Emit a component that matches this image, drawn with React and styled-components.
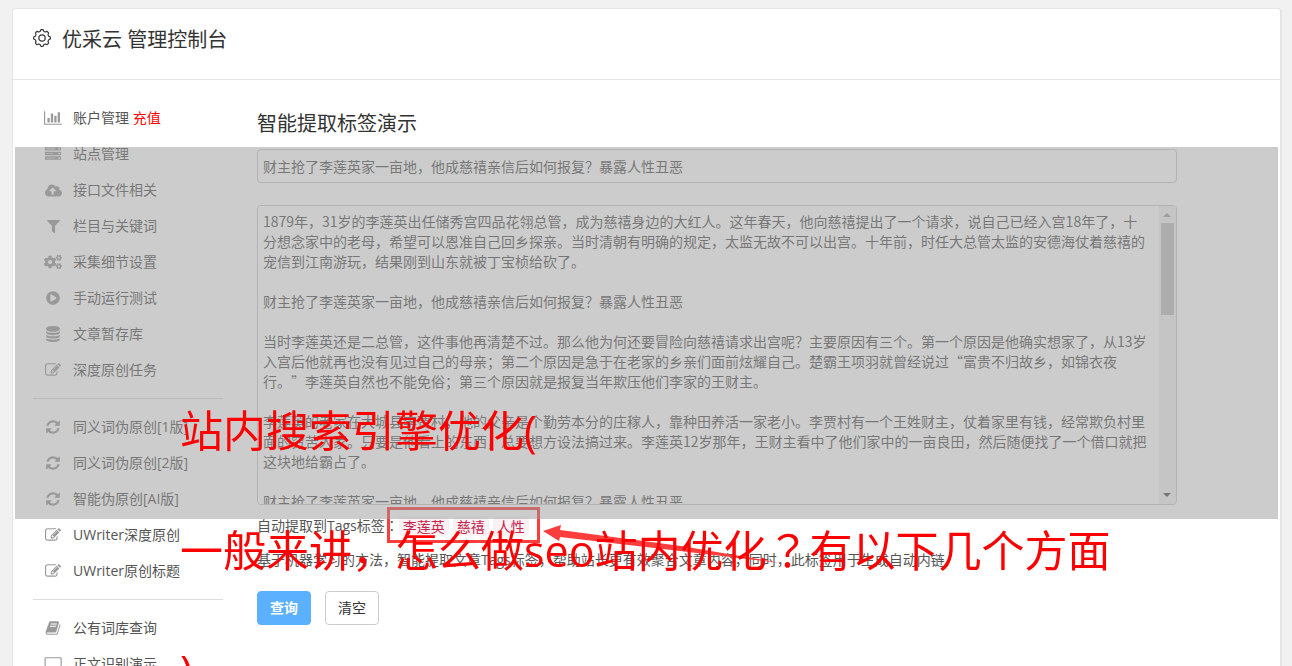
import React from 'react';
import styled, { createGlobalStyle } from 'styled-components';
import { FaCloudUploadAlt, FaCogs, FaFilter, FaPlayCircle } from 'react-icons/fa';

const latinFirst = '"Open Sans", "Noto Sans CJK SC", sans-serif';
const hanFirst = '"Noto Sans CJK SC", sans-serif';

const GlobalStyle = createGlobalStyle`
  *, *::before, *::after { box-sizing: border-box; }
  body {
    margin: 0;
    background: #f1f1f1;
    color: #555;
    font: 14px/20px ${latinFirst};
    text-spacing-trim: space-all;
  }
`;

const Page = styled.div`
  position: relative;
  height: 100vh;
  overflow: hidden;
  padding: 8px 10px 0 12px;
`;

const Card = styled.div`
  min-height: 100%;
  background: #fff;
  border: 1px solid #e5e5e5;
  border-right-width: 2px;
  border-radius: 4px;
`;

const Header = styled.header`
  display: flex;
  align-items: center;
  gap: 11px;
  height: 71px;
  padding: 0 20px 12px;
  border-bottom: 1px solid #e5e5e5;
`;

const Title = styled.h1`
  margin: 0;
  padding-top: 4px;
  color: #333;
  font-size: 20px;
  line-height: 28px;
  font-weight: 400;
`;

const Body = styled.div`
  display: flex;
  align-items: flex-start;
  gap: 34px;
  padding: 20px;
`;

const Sidebar = styled.nav`
  flex: 0 0 190px;
`;

const Menu = styled.ul`
  list-style: none;
  margin: 0;
  padding: 0;

  & + & {
    margin-top: 10px;
    padding-top: 10px;
    border-top: 1px solid #ddd;
  }
`;

const MenuLink = styled.a`
  display: flex;
  align-items: center;
  gap: 10px;
  height: 36px;
  padding-left: 10px;
  color: #555;
  text-decoration: none;
  white-space: nowrap;
`;

const IconSlot = styled.span`
  display: flex;
  justify-content: center;
  flex: 0 0 20px;
  color: #999;
`;

const Recharge = styled.span`
  color: #f00;
`;

const Main = styled.main`
  position: relative;
  flex: 1;
  max-width: 920px;
`;

const Heading = styled.h2`
  margin: 10px 0 11px;
  color: #333;
  font-size: 20px;
  line-height: 28px;
  font-weight: 400;
`;

const TitleInput = styled.input`
  display: block;
  width: 100%;
  height: 34px;
  padding: 0 5px;
  border: 1px solid #ccc;
  border-radius: 4px;
  background: #fff;
  color: #555;
  font: 14px/20px ${hanFirst};
`;

const ArticleFrame = styled.div`
  display: flex;
  height: 300px;
  margin-top: 22px;
  border: 1px solid #ccc;
  border-radius: 4px;
  overflow: hidden;
`;

const ArticleBox = styled.textarea`
  flex: 1;
  min-width: 0;
  padding: 5px 10px 5px 5px;
  border: 0;
  outline: 0;
  background: #fff;
  color: #555;
  font: 14px/20px ${hanFirst};
  text-spacing-trim: space-all;
  resize: none;
`;

const ScrollRail = styled.div`
  display: flex;
  flex-direction: column;
  align-items: center;
  width: 17px;
  background: #f1f1f1;
`;

const ScrollArrow = styled.svg`
  flex: 0 0 17px;
  width: 17px;
  fill: ${(p) => (p.$active ? '#505050' : '#a3a3a3')};
`;

const ScrollTrack = styled.div`
  flex: 1;
  width: 13px;
`;

const ScrollThumb = styled.div`
  height: 35%;
  background: #c1c1c1;
`;

const TagRow = styled.div`
  display: flex;
  align-items: center;
  height: 20px;
  margin-top: 11px;
`;

const Tags = styled.div`
  display: flex;
  gap: 4px;
`;

const Tag = styled.code`
  padding: 0 4px;
  border-radius: 4px;
  background: #f9f2f4;
  color: #c7254e;
  font: 14px/19px ${hanFirst};
`;

/* Full-width punctuation centred in its cell; adds nothing to the line's height */
const CentredMark = styled.span`
  font-family: "Noto Sans CJK TC", sans-serif;
  line-height: 0;
`;

const Hint = styled.p`
  margin: 14px 0 21px;
`;

const Buttons = styled.div`
  display: flex;
  gap: 14px;
`;

const Button = styled.button`
  width: 54px;
  height: 34px;
  padding: 0;
  border: 1px solid ${(p) => (p.$primary ? '#5bb0ff' : '#ccc')};
  border-radius: 4px;
  background: ${(p) => (p.$primary ? '#5bb0ff' : '#fff')};
  color: ${(p) => (p.$primary ? '#fff' : '#333')};
  font: ${(p) => (p.$primary ? 700 : 400)} 14px/20px ${latinFirst};
`;

const TagFrame = styled.div`
  position: absolute;
  left: 130px;
  top: 407px;
  width: 153px;
  height: 36px;
  border: 3px solid #fb3d3d;
`;

const Arrow = styled.svg`
  position: absolute;
  left: 286px;
  top: 420px;
`;

const Banner = styled.div`
  position: absolute;
  top: 147px;
  left: 15px;
  right: 14px;
  height: 372px;
  padding: 254px 0 0 165px;
  background: rgba(153, 153, 153, 0.5);
  pointer-events: none;
`;

const BannerLine = styled.p`
  margin: 0 0 60px;
  color: #f00;
  font-size: 43px;
  line-height: 60px;
  white-space: nowrap;
`;

const glyphs = {
  chart: [2048, 'M640 896v512h-256v-512h256zm384-512v1024h-256v-1024h256zm1024 1152v128h-2048v-1536h128v1408h1920zm-640-896v768h-256v-768h256zm384-384v1152h-256v-1152h256z'],
  server: [1792, 'M0 128h1792v384h-1792zM128 288v64h1024v-64zm1376-48v160h160v-160zM0 640h1792v384h-1792zM128 800v64h768v-64zm1376-48v160h160v-160zM0 1152h1792v384h-1792zM128 1312v64h1024v-64zm1376-48v160h160v-160z'],
  database: [1792, 'M896 768q237 0 443-43t325-127v170q0 69-103 128t-280 93.5-385 34.5-385-34.5-280-93.5-103-128v-170q119 84 325 127t443 43zm0 768q237 0 443-43t325-127v170q0 69-103 128t-280 93.5-385 34.5-385-34.5-280-93.5-103-128v-170q119 84 325 127t443 43zm0-384q237 0 443-43t325-127v170q0 69-103 128t-280 93.5-385 34.5-385-34.5-280-93.5-103-128v-170q119 84 325 127t443 43zm0-1152q208 0 385 34.5t280 93.5 103 128v128q0 69-103 128t-280 93.5-385 34.5-385-34.5-280-93.5-103-128v-128q0-69 103-128t280-93.5 385-34.5z'],
  edit: [1792, 'M888 1184l116-116-152-152-116 116v56h96v96h56zm440-720q-16-16-33 1l-350 350q-17 17-1 33t33-1l350-350q17-17 1-33zm80 594v190q0 119-84.5 203.5t-203.5 84.5h-832q-119 0-203.5-84.5t-84.5-203.5v-832q0-119 84.5-203.5t203.5-84.5h832q63 0 117 25 15 7 18 23 3 17-9 29l-49 49q-14 14-32 8-23-6-45-6h-832q-66 0-113 47t-47 113v832q0 66 47 113t113 47h832q66 0 113-47t47-113v-126q0-13 9-22l64-64q15-15 35-7t20 29zm-96-738l288 288-672 672h-288v-288zm444 132l-92 92-288-288 92-92q28-28 68-28t68 28l152 152q28 28 28 68t-28 68z'],
  refresh: [1792, 'M1639 1056q0 5-1 7-64 268-268 434.5t-478 166.5q-146 0-282.5-55t-243.5-157l-129 129q-19 19-45 19t-45-19-19-45v-448q0-26 19-45t45-19h448q26 0 45 19t19 45-19 45l-137 137q71 66 161 102t187 36q134 0 250-65t186-179q11-17 53-117 8-23 30-23h192q13 0 22.5 9.5t9.5 22.5zm25-800v448q0 26-19 45t-45 19h-448q-26 0-45-19t-19-45 19-45l138-138q-148-137-349-137-134 0-250 65t-186 179q-11 17-53 117-8 23-30 23h-199q-13 0-22.5-9.5t-9.5-22.5v-7q65-268 270-434.5t480-166.5q146 0 284 55.5t245 156.5l130-129q19-19 45-19t45 19 19 45z'],
  book: [1792, 'M1703 478q40 57 18 129l-275 906q-19 64-76.5 107.5t-122.5 43.5h-923q-77 0-148.5-53.5t-99.5-131.5q-24-67-2-127 0-4 3-27t4-37q1-8-3-21.5t-3-19.5q2-11 8-21t16.5-23.5 16.5-23.5q23-38 45-91.5t30-91.5q3-10 .5-30t-.5-28q3-11 17-28t17-23q21-36 42-92t25-90q1-9-2.5-32t.5-28q4-13 22-30.5t22-22.5q19-26 42.5-84.5t27.5-96.5q1-8-3-25.5t-2-26.5q2-8 9-18t18-23 17-21q8-12 16.5-30.5t15-35 16-36 19.5-32 26.5-23.5 36-11.5 47.5 5.5l-1 3q38-9 51-9h761q74 0 114 56t18 130l-274 906q-36 119-71.5 153.5t-128.5 34.5h-869q-27 0-38 15-11 16-1 43 24 70 144 70h923q29 0 56-15.5t35-41.5l300-987q7-22 5-57 38 15 59 43zm-1064 2q-4 13 2 22.5t20 9.5h608q13 0 25.5-9.5t16.5-22.5l21-64q4-13-2-22.5t-20-9.5h-608q-13 0-25.5 9.5t-16.5 22.5zm-83 256q-4 13 2 22.5t20 9.5h608q13 0 25.5-9.5t16.5-22.5l21-64q4-13-2-22.5t-20-9.5h-608q-13 0-25.5 9.5t-16.5 22.5z'],
  laptop: [2048, 'M224 1408q-66 0-113-47t-47-113v-960q0-66 47-113t113-47h1600q66 0 113 47t47 113v960q0 66-47 113t-113 47zm-32-1120v960q0 32 32 32h1600q32 0 32-32v-960q0-32-32-32h-1600q-32 0-32 32zM0 1472h2048v96q0 96-160 96h-1728q-160 0-160-96z'],
};

const Glyph = ({ name }) => {
  const [w, d] = glyphs[name];
  return (
    <svg width={(w * 16) / 1792} height="16" viewBox={`0 0 ${w} 1792`} fill="currentColor" fillRule="evenodd" aria-hidden="true">
      <path d={d} />
    </svg>
  );
};

const gearPath = (() => {
  const pts = [];
  for (let i = 0; i < 96; i += 1) {
    const a = (i / 96) * Math.PI * 2;
    const r = 7.6 + 0.8 * Math.tanh(2.2 * Math.cos(8 * a));
    pts.push(`${(9 + r * Math.sin(a)).toFixed(2)} ${(9 - r * Math.cos(a)).toFixed(2)}`);
  }
  return `M${pts.join('L')}Z`;
})();

const Gear = () => (
  <svg width="18" height="18" viewBox="0 0 18 18" fill="none" stroke="#333" strokeWidth="1.2" aria-hidden="true">
    <path d={gearPath} />
    <circle cx="9" cy="9" r="3.2" />
  </svg>
);

const menus = [
  [
    { icon: <Glyph name="chart" />, label: '账户管理', extra: '充值' },
    { icon: <Glyph name="server" />, label: '站点管理' },
    { icon: <FaCloudUploadAlt size={17} />, label: '接口文件相关' },
    { icon: <FaFilter size={13} />, label: '栏目与关键词' },
    { icon: <FaCogs size={18} />, label: '采集细节设置' },
    { icon: <FaPlayCircle size={14} />, label: '手动运行测试' },
    { icon: <Glyph name="database" />, label: '文章暂存库' },
    { icon: <Glyph name="edit" />, label: '深度原创任务' },
  ],
  [
    { icon: <Glyph name="refresh" />, label: '同义词伪原创[1版]' },
    { icon: <Glyph name="refresh" />, label: '同义词伪原创[2版]' },
    { icon: <Glyph name="refresh" />, label: '智能伪原创[AI版]' },
    { icon: <Glyph name="edit" />, label: 'UWriter深度原创' },
    { icon: <Glyph name="edit" />, label: 'UWriter原创标题' },
  ],
  [
    { icon: <Glyph name="book" />, label: '公有词库查询' },
    { icon: <Glyph name="laptop" />, label: '正文识别演示' },
  ],
];

const headline = '财主抢了李莲英家一亩地，他成慈禧亲信后如何报复？暴露人性丑恶';

const article = [
  '1879年，31岁的李莲英出任储秀宫四品花翎总管，成为慈禧身边的大红人。这年春天，他向慈禧提出了一个请求，说自己已经入宫18年了，十分想念家中的老母，希望可以恩准自己回乡探亲。当时清朝有明确的规定，太监无故不可以出宫。十年前，时任大总管太监的安德海仗着慈禧的宠信到江南游玩，结果刚到山东就被丁宝桢给砍了。',
  headline,
  '当时李莲英还是二总管，这件事他再清楚不过。那么他为何还要冒险向慈禧请求出宫呢？主要原因有三个。第一个原因是他确实想家了，从13岁入宫后他就再也没有见过自己的母亲；第二个原因是急于在老家的乡亲们面前炫耀自己。楚霸王项羽就曾经说过“富贵不归故乡，如锦衣夜行。”李莲英自然也不能免俗；第三个原因就是报复当年欺压他们李家的王财主。',
  '李莲英的老家在大城县李贾村，他的父亲是个勤劳本分的庄稼人，靠种田养活一家老小。李贾村有一个王姓财主，仗着家里有钱，经常欺负村里面的穷苦人家。只要是他看上的东西，总要想方设法搞过来。李莲英12岁那年，王财主看中了他们家中的一亩良田，然后随便找了一个借口就把这块地给霸占了。',
  headline,
].join('\n\n');

export default function App() {
  return (
    <Page lang="zh-CN">
      <GlobalStyle />
      <Card>
        <Header>
          <Gear />
          <Title>优采云 管理控制台</Title>
        </Header>
        <Body>
          <Sidebar>
            {menus.map((items, i) => (
              <Menu key={i}>
                {items.map((item) => (
                  <li key={item.label}>
                    <MenuLink href="#">
                      <IconSlot>{item.icon}</IconSlot>
                      <span>
                        {item.label}
                        {item.extra && <Recharge> {item.extra}</Recharge>}
                      </span>
                    </MenuLink>
                  </li>
                ))}
              </Menu>
            ))}
          </Sidebar>
          <Main>
            <Heading>智能提取标签演示</Heading>
            <TitleInput aria-label="标题" defaultValue={headline} />
            <ArticleFrame>
              <ArticleBox aria-label="正文" defaultValue={article} />
              <ScrollRail aria-hidden="true">
                <ScrollArrow viewBox="0 0 17 17"><path d="M4 11h8l-4-4z" /></ScrollArrow>
                <ScrollTrack><ScrollThumb /></ScrollTrack>
                <ScrollArrow viewBox="0 0 17 17" $active><path d="M4 6h8l-4 4z" /></ScrollArrow>
              </ScrollRail>
            </ArticleFrame>
            <TagRow>
              <span>自动提取到Tags标签<CentredMark lang="zh-TW">：</CentredMark></span>
              <Tags>
                <Tag>李莲英</Tag>
                <Tag>慈禧</Tag>
                <Tag>人性</Tag>
              </Tags>
            </TagRow>
            <Hint>基于机器学习的方法，智能提取文章Tags标签，帮助站长更有效聚合文章内容，同时，此标签用于生成自动内链</Hint>
            <Buttons>
              <Button type="button" $primary>查询</Button>
              <Button type="button">清空</Button>
            </Buttons>
            <TagFrame />
            <Arrow width="240" height="46" viewBox="0 0 240 46" aria-hidden="true">
              <path d="M0 11L18 5L17 10L138 26L238 43L137 31L17 17L16 21Z" fill="#fb3d3d" />
            </Arrow>
          </Main>
        </Body>
      </Card>
      <Banner>
        <BannerLine>站内搜索引擎优化(</BannerLine>
        <BannerLine>一般来讲，怎么做seo站内优化<CentredMark lang="zh-TW">？</CentredMark>有以下几个方面</BannerLine>
        <BannerLine>)</BannerLine>
      </Banner>
    </Page>
  );
}
